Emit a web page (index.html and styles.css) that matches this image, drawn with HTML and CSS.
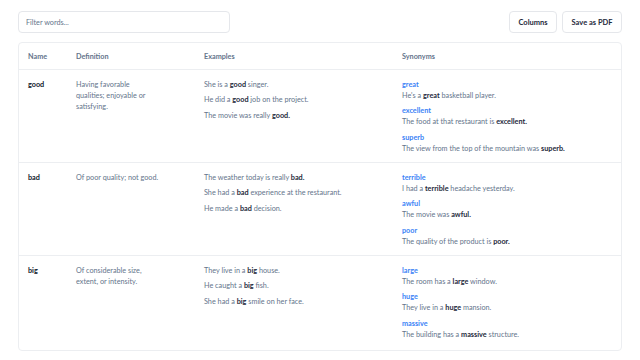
FILE: index.html
```html
<!DOCTYPE html>
<html>
<head>
<meta charset="utf-8">
<link rel="stylesheet" href="styles.css">
</head>
<body>
<div class="page">
  <div class="toolbar">
    <input class="filter" type="text" placeholder="Filter words...">
    <div class="actions">
      <button class="btn">Columns</button>
      <button class="btn">Save as PDF</button>
    </div>
  </div>
  <div class="card">
    <table class="words">
      <colgroup>
        <col class="c-name"><col class="c-def"><col class="c-ex"><col class="c-syn">
      </colgroup>
      <thead>
        <tr><th>Name</th><th>Definition</th><th>Examples</th><th>Synonyms</th></tr>
      </thead>
      <tbody>
        <tr>
          <td class="name">good</td>
          <td class="def"><div class="def-text">Having favorable qualities; enjoyable or satisfying.</div></td>
          <td class="ex">
            <p>She is a <b>good</b> singer.</p>
            <p>He did a <b>good</b> job on the project.</p>
            <p>The movie was really <b>good.</b></p>
          </td>
          <td class="syn">
            <div class="syn-item"><span class="syn-word">great</span><span>He's a <b>great</b> basketball player.</span></div>
            <div class="syn-item"><span class="syn-word">excellent</span><span>The food at that restaurant is <b>excellent.</b></span></div>
            <div class="syn-item"><span class="syn-word">superb</span><span>The view from the top of the mountain was <b>superb.</b></span></div>
          </td>
        </tr>
        <tr>
          <td class="name">bad</td>
          <td class="def"><div class="def-text">Of poor quality; not good.</div></td>
          <td class="ex">
            <p>The weather today is really <b>bad.</b></p>
            <p>She had a <b>bad</b> experience at the restaurant.</p>
            <p>He made a <b>bad</b> decision.</p>
          </td>
          <td class="syn">
            <div class="syn-item"><span class="syn-word">terrible</span><span>I had a <b>terrible</b> headache yesterday.</span></div>
            <div class="syn-item"><span class="syn-word">awful</span><span>The movie was <b>awful.</b></span></div>
            <div class="syn-item"><span class="syn-word">poor</span><span>The quality of the product is <b>poor.</b></span></div>
          </td>
        </tr>
        <tr>
          <td class="name">big</td>
          <td class="def"><div class="def-text">Of considerable size, extent, or intensity.</div></td>
          <td class="ex">
            <p>They live in a <b>big</b> house.</p>
            <p>He caught a <b>big</b> fish.</p>
            <p>She had a <b>big</b> smile on her face.</p>
          </td>
          <td class="syn">
            <div class="syn-item"><span class="syn-word">large</span><span>The room has a <b>large</b> window.</span></div>
            <div class="syn-item"><span class="syn-word">huge</span><span>They live in a <b>huge</b> mansion.</span></div>
            <div class="syn-item"><span class="syn-word">massive</span><span>The building has a <b>massive</b> structure.</span></div>
          </td>
        </tr>
      </tbody>
    </table>
  </div>
</div>
</body>
</html>
```

FILE: styles.css
```css
* { box-sizing: border-box; }
html, body { margin: 0; padding: 0; background: #ffffff; }
body {
  font-family: "Lato", "Noto Sans", sans-serif;
  font-size: 7.25px;
  color: #64748b;
}
.page { padding: 11px 18px 0 18px; }
.toolbar {
  display: flex;
  justify-content: space-between;
  align-items: center;
  height: 22px;
}
.filter {
  width: 212px;
  height: 22px;
  border: 1px solid #e5e7eb;
  border-radius: 4px;
  padding: 0 7px;
  font-family: inherit;
  font-size: 7.25px;
  color: #374151;
  outline: none;
}
.filter::placeholder { color: #64748b; }
.actions { display: flex; gap: 5px; }
.btn {
  height: 22px;
  border: 1px solid #e5e7eb;
  border-radius: 4px;
  background: #fff;
  font-family: inherit;
  font-size: 7.5px;
  font-weight: 700;
  color: #1e293b;
  padding: 0;
}
.btn:first-child { width: 48px; }
.btn:last-child { width: 60px; }
.card {
  margin-top: 9px;
  border: 1px solid #eceef1;
  border-radius: 4px;
}
.words {
  width: 100%;
  border-collapse: collapse;
  table-layout: fixed;
}
.c-name { width: 48px; }
.c-def { width: 128px; }
.c-ex { width: 198px; }
.c-syn { width: auto; }
th {
  text-align: left;
  font-weight: 700;
  color: #64748b;
  height: 26px;
  padding: 1px 9px 0 9px;
  border-bottom: 1px solid #eceef1;
}
td {
  vertical-align: top;
  padding: 9px 9px 8px 9px;
  line-height: 11px;
  border-bottom: 1px solid #eceef1;
}
tbody tr:last-child td { border-bottom: none; padding-bottom: 10px; }
td.name { font-weight: 700; color: #0f172a; }
.def-text { width: 84px; }
.ex p { margin: 0 0 4.5px 0; line-height: 11px; }
b { font-weight: 700; color: #1e293b; }
.syn-item { display: flex; flex-direction: column; margin-bottom: 4.5px; }
.syn-item:last-child { margin-bottom: 0; }
.syn-word { color: #3b82f6; font-weight: 700; }
```
